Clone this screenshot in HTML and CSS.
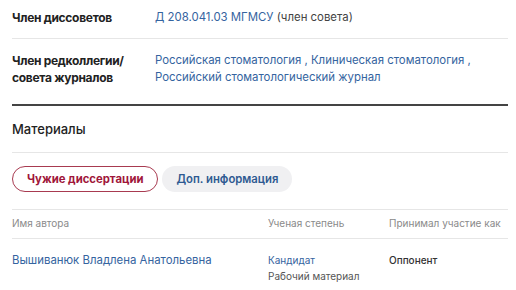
FILE: index.html
```html
<!DOCTYPE html>
<html lang="ru">
  <head>
    <meta charset="UTF-8" />
    <meta name="viewport" content="width=device-width, initial-scale=1.0" />
    <title>Профиль</title>
    <link rel="stylesheet" href="styles.css">
  </head>
  <body>
    <div class="page">
      <div class="info-row first">
        <div class="label">Член диссоветов</div>
        <div class="value"><a href="javascript:">Д 208.041.03 МГМСУ</a> <span class="note">(член совета)</span></div>
      </div>
      <div class="info-row last">
        <div class="label">Член редколлегии/<br />совета журналов</div>
        <div class="value">
          <a href="javascript:">Российская стоматология</a> , <a href="javascript:">Клиническая стоматология</a> ,<br />
          <a href="javascript:">Российский стоматологический журнал</a>
        </div>
      </div>

      <h2 class="section-title">Материалы</h2>

      <div class="tabs">
        <button class="tab active">Чужие диссертации</button>
        <button class="tab">Доп. информация</button>
      </div>

      <table class="materials">
        <thead>
          <tr>
            <th class="col-name">Имя автора</th>
            <th class="col-degree">Ученая степень</th>
            <th>Принимал участие как</th>
          </tr>
        </thead>
        <tbody>
          <tr>
            <td><a href="javascript:" class="author">Вышиванюк Владлена Анатольевна</a></td>
            <td class="small">
              <a href="javascript:">Кандидат</a><br />
              <span class="sub">Рабочий материал</span>
            </td>
            <td class="small role">Оппонент</td>
          </tr>
        </tbody>
      </table>
    </div>
  </body>
</html>
```

FILE: styles.css
```css
* {
  margin: 0;
  padding: 0;
  box-sizing: border-box;
}
body {
  font-family: Inter, "Noto Sans", sans-serif;
  font-size: 11.4px;
  color: #222;
  background: #fff;
}
a {
  color: #3564a0;
  text-decoration: none;
}
.page {
  padding: 0 8px 0 12px;
}
.info-row {
  display: flex;
  line-height: 17px;
  border-bottom: 1px solid #e6e6e6;
}
.info-row.first {
  padding: 9px 0 12px;
}
.info-row.last {
  padding: 13px 0 18px;
  border-bottom: 2px solid #444;
}
.label {
  width: 143px;
  flex-shrink: 0;
  font-size: 12px;
  font-weight: 650;
  letter-spacing: -0.3px;
}
.value {
  color: #3564a0;
}
.value .note {
  color: #444;
}
.section-title {
  font-size: 13px;
  font-weight: 500;
  line-height: 20px;
  padding: 13px 0 13px;
  border-bottom: 1px solid #e6e6e6;
}
.tabs {
  display: flex;
  gap: 4px;
  padding: 13px 0 17px;
  border-bottom: 1px solid #e6e6e6;
}
.tab {
  font-family: inherit;
  font-size: 11.3px;
  font-weight: 700;
  height: 26px;
  padding: 0 14px;
  border-radius: 13px;
  border: 1.5px solid transparent;
  background: #f0f0f2;
  color: #2e5a91;
  cursor: pointer;
}
.tab.active {
  background: #fff;
  border-color: #a83a50;
  color: #a0163a;
}
.tab + .tab {
  font-weight: 600;
  padding: 0 13px;
}
.materials {
  width: 100%;
  border-collapse: collapse;
}
.materials th {
  text-align: left;
  font-weight: 400;
  font-size: 10px;
  color: #8a8a8a;
  line-height: 15px;
  padding: 6px 0 7px;
  border-bottom: 1px solid #e6e6e6;
  white-space: nowrap;
}
.col-name {
  width: 256px;
}
.col-degree {
  width: 121px;
}
.materials td {
  vertical-align: top;
  padding: 13px 0;
  line-height: 17px;
}
.materials td.small {
  font-size: 10px;
  line-height: 16px;
  padding-top: 13px;
}
.sub {
  color: #555;
}
.role {
  font-weight: 500;
  color: #333;
}
```
